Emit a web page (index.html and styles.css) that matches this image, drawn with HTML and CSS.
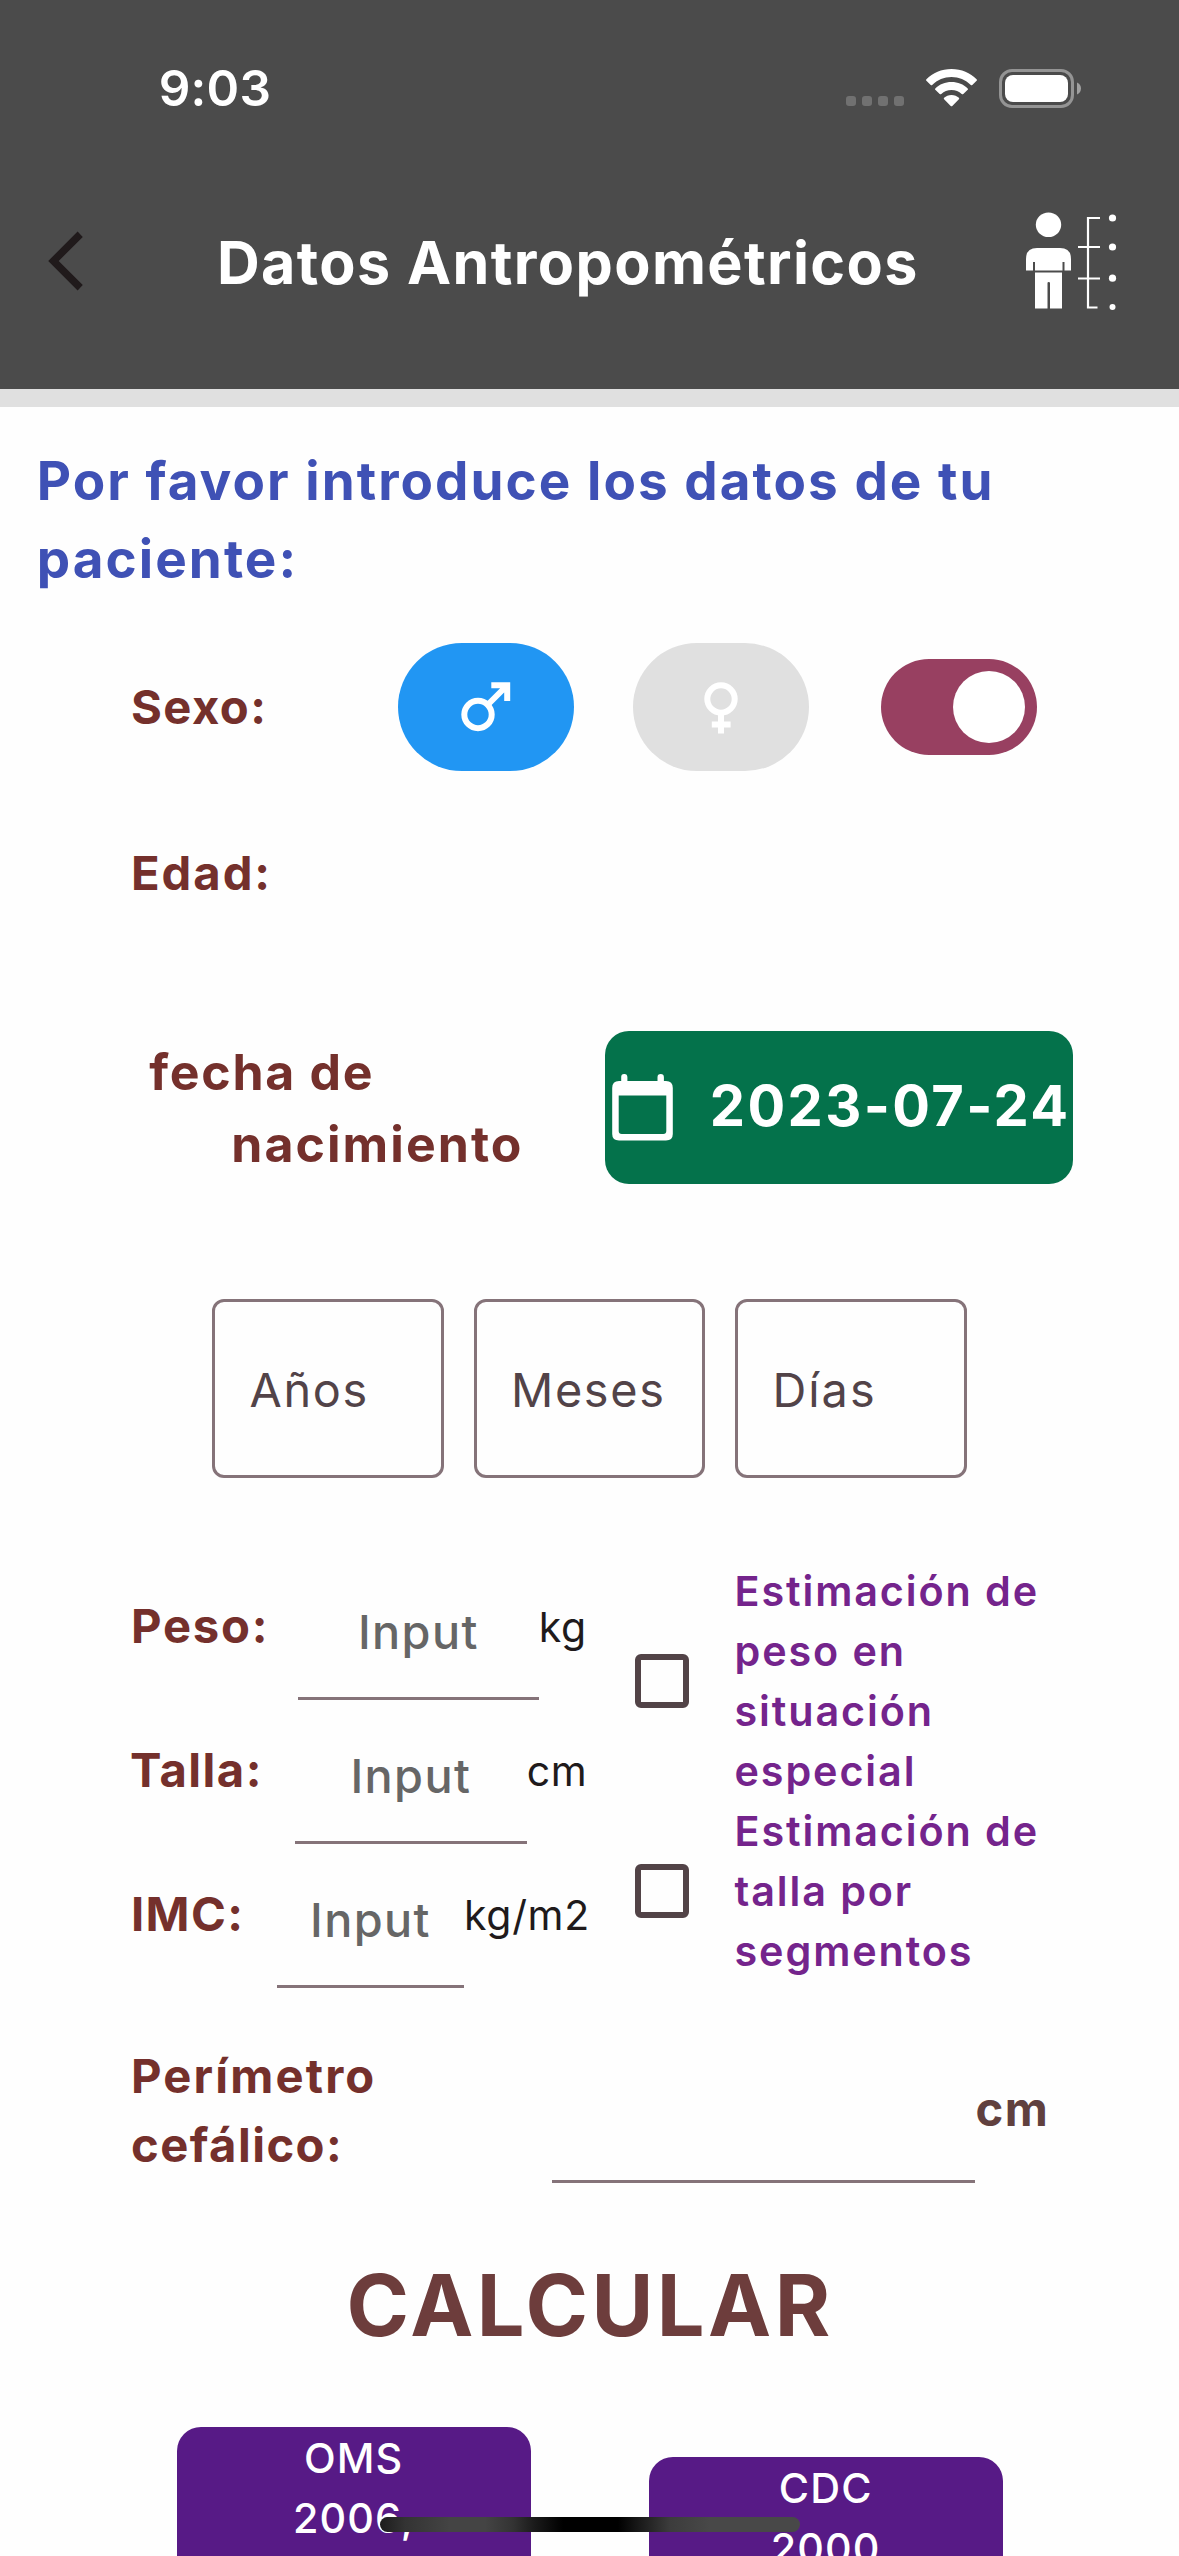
FILE: index.html
```html
<!DOCTYPE html>
<html lang="es">
<head>
<meta charset="utf-8">
<title>Datos Antropométricos</title>
<link rel="stylesheet" href="styles.css">
</head>
<body>
<div class="screen">
  <header class="header">
    <div class="status-bar">
      <span class="clock">9:03</span>
      <div class="status-icons">
        <svg class="cellular" width="58" height="10" viewBox="0 0 58 10" fill="#717171"><rect width="10" height="10" rx="3"/><rect x="16" width="10" height="10" rx="3"/><rect x="32" width="10" height="10" rx="3"/><rect x="48" width="10" height="10" rx="3"/></svg>
        <svg class="wifi" width="51" height="38" viewBox="0 0 51 38" fill="#fff"><path d="M25.500 0C35.500 0 44.300 4 50.600 10.200Q51.300 11 50.600 11.800L46.300 16Q45.600 16.600 44.800 15.900C39.600 11 32.900 8 25.500 8S11.400 11 6.200 15.900Q5.400 16.600 4.700 16L0.400 11.800Q-0.300 11 0.400 10.200C6.700 4 15.500 0 25.500 0Z"/><path d="M25.500 13C31.900 13 37.500 15.400 41.700 19.400Q42.400 20.100 41.700 20.800L37.300 25Q36.500 25.600 35.700 25C33 22.500 29.500 21 25.500 21S18 22.500 15.300 25Q14.500 25.600 13.700 25L9.300 20.800Q8.600 20.100 9.300 19.400C13.500 15.400 19.100 13 25.500 13Z"/><path d="M25.500 26C28.500 26 31 27.100 32.900 28.800Q33.600 29.500 32.900 30.200L26.300 36.900Q25.500 37.600 24.700 36.900L18.100 30.200Q17.400 29.500 18.100 28.800C20 27.100 22.500 26 25.500 26Z"/></svg>
        <svg class="battery" width="82" height="39" viewBox="0 0 82 39"><rect x="1.500" y="1.500" width="72" height="36" rx="11.500" fill="none" stroke="#949494" stroke-width="3"/><rect x="6" y="6" width="63" height="27" rx="8" fill="#fff"/><path d="M78 13.500C80.400 14.500 82 16.800 82 19.500S80.400 24.500 78 25.500Z" fill="#a0a0a0"/></svg>
      </div>
    </div>
    <nav class="app-bar">
      <svg class="back" width="35" height="60" viewBox="0 0 35 60"><path d="M29.600 0.500L34.800 5.900L10.700 30L34.800 54.100L29.600 59.500L0.200 30Z" fill="#201a1b"/></svg>
      <h1 class="title">Datos Antropométricos</h1>
      <svg class="body-icon" width="92" height="98" viewBox="0 0 92 98" fill="#fff"><ellipse cx="22.500" cy="12.700" rx="12.700" ry="12.300"/><path d="M11 36H34Q45 36 45 47V58.500H38.500V50H36.500V58.500H9V50H7V58.500H0V47Q0 36 11 36Z"/><path d="M9 60.500H36V96.500H24V71Q24 70 22.700 70Q21.500 70 21.500 71V96.500H9Z"/><path d="M74 6H62V95.500H71.500M52 35H74M52 66.500H74" fill="none" stroke="#fff" stroke-width="2.200"/><circle cx="86.500" cy="6" r="3.600"/><circle cx="86.500" cy="35" r="3.600"/><circle cx="86.500" cy="66.200" r="3.600"/><circle cx="86.500" cy="95" r="3"/></svg>
    </nav>
  </header>
  <main class="form">
    <h2 class="intro">Por favor introduce los datos de tu<br>paciente:</h2>

    <section class="sex-row">
      <span class="label sex-label">Sexo:</span>
      <div class="sex male">
        <svg width="50" height="50" viewBox="0 0 50 50" fill="none" stroke="#fff" stroke-width="6"><circle cx="17" cy="32.500" r="13.700"/><path d="M26.500 23L44 5.500M30.300 3.300H46.200V19"/></svg>
      </div>
      <div class="sex female">
        <svg width="34" height="52" viewBox="0 0 34 52" fill="none" stroke="#fff" stroke-width="6"><circle cx="17" cy="17" r="13.700"/><path d="M17 31V51.500M7.800 42.500H26.600"/></svg>
      </div>
      <div class="toggle"><div class="knob"></div></div>
    </section>

    <div class="label age-label">Edad:</div>

    <section class="birth-row">
      <div class="birth-label"><span class="birth-first">fecha de</span><span class="birth-second">nacimiento</span></div>
      <div class="date-button">
        <svg width="61" height="67" viewBox="0 0 61 67"><path d="M12 0A3.300 3.300 0 0 1 15.400 3.300V7H45.500V3.300A3.200 3.200 0 0 1 51.900 3.300V7H54Q60.800 7 60.800 14V60Q60.800 66.500 54 66.500H7Q0.200 66.500 0.200 60V14Q0.200 7 7 7H9.200V3.300A3.100 3.100 0 0 1 12 0ZM6.700 21.500V57Q6.700 60 9.700 60H51.300Q54.300 60 54.300 57V21.500Z" fill="#fff" fill-rule="evenodd"/></svg>
        <span class="date">2023-07-24</span>
      </div>
    </section>

    <section class="age-boxes">
      <div class="age-box">Años</div>
      <div class="age-box meses">Meses</div>
      <div class="age-box dias">Días</div>
    </section>

    <section class="measures">
      <div class="fields">
        <div class="field peso"><span class="label">Peso:</span><span class="entry">Input</span><span class="unit">kg</span></div>
        <div class="field talla"><span class="label">Talla:</span><span class="entry">Input</span><span class="unit">cm</span></div>
        <div class="field imc"><span class="label">IMC:</span><span class="entry">Input</span><span class="unit">kg/m2</span></div>
      </div>
      <div class="options">
        <div class="option"><span class="checkbox"></span><p>Estimación de<br>peso en<br>situación<br>especial</p></div>
        <div class="option"><span class="checkbox"></span><p>Estimación de<br>talla por<br>segmentos</p></div>
      </div>
    </section>

    <section class="head-row">
      <div class="head-label">Perímetro<br><span class="head-second">cefálico:</span></div>
      <div class="head-entry"></div>
      <span class="head-unit">cm</span>
    </section>

    <div class="calculate">CALCULAR</div>

    <section class="references">
      <div class="reference">OMS<br>2006,</div>
      <div class="reference cdc">CDC<br>2000</div>
    </section>
  </main>
  <div class="home-indicator"></div>
</div>
</body>
</html>
```

FILE: styles.css
```css
* { box-sizing: border-box; }
body { margin: 0; background: #fff; font-family: Inter, "Liberation Sans", sans-serif; font-kerning: normal; }
svg { display: block; flex: none; }
h1, h2, p { margin: 0; }

.screen { position: relative; width: 1179px; height: 2556px; overflow: hidden; background: #fefefe; }

/* Header */
.header { height: 407px; background: #4b4b4b; border-bottom: 18px solid #e0e0e0; }
.status-bar { height: 176px; padding: 0 98px 0 158.700px; display: flex; align-items: center; justify-content: space-between; }
.clock { color: #fff; font-size: 49.500px; font-weight: 600; letter-spacing: 0.200px; }
.status-icons { display: flex; align-items: center; }
.cellular { margin: 26px 22px 0 0; }
.wifi { margin-right: 22px; }
.app-bar { height: 213px; padding: 0 61px 40px 48px; display: flex; align-items: center; }
.back { margin: -4px 134px 0 0; }
.title { flex: 1; color: #fff; font-size: 59.200px; font-weight: 700; letter-spacing: 1.380px; white-space: nowrap; }
.body-icon { margin-top: -4px; }

/* Form */
.intro { padding: 35px 0 0 36.800px; color: #3f51b5; font-size: 53px; font-weight: 700; line-height: 78px; letter-spacing: 2.050px; white-space: nowrap; }
.label { color: #74302c; font-size: 47.200px; font-weight: 700; line-height: 66px; letter-spacing: 1.450px; }

.sex-row { height: 128px; margin-top: 45px; padding-left: 131px; display: flex; align-items: center; }
.sex-label { width: 266.500px; }
.sex { width: 176px; height: 128px; border-radius: 64px; display: flex; align-items: center; }
.male { background: #2196f3; margin-right: 59.500px; padding-left: 63px; }
.female { background: #e0e0e0; padding: 2px 0 0 71px; }
.toggle { width: 156.500px; height: 96px; margin-left: 71.500px; padding: 12px; border-radius: 48px; background: #984061; display: flex; justify-content: flex-end; }
.knob { width: 72px; height: 72px; border-radius: 50%; background: #fff; }
.age-label { margin: 69px 0 0 131px; letter-spacing: 1.950px; }

.birth-row { margin-top: 125px; display: flex; align-items: center; height: 153px; padding-left: 149.300px; }
.birth-label { width: 455.500px; color: #74302c; font-size: 50px; font-weight: 700; line-height: 72px; letter-spacing: 2.050px; display: flex; flex-direction: column; }
.birth-first { letter-spacing: 1.700px; }
.birth-second { padding-left: 82px; }
.date-button { width: 468.300px; height: 153px; padding-left: 7.500px; border-radius: 24px; background: #04724b; color: #fff; display: flex; align-items: center; gap: 36.500px; font-size: 56px; font-weight: 700; letter-spacing: 2.350px; white-space: nowrap; }
.date { padding-bottom: 3px; }

.age-boxes { margin: 115px 0 0 212px; display: flex; gap: 30px; }
.age-box { width: 231.500px; height: 179px; padding: 3px 0 0 34.500px; border: 3px solid #857379; border-radius: 12px; color: #524348; font-size: 46.800px; letter-spacing: 1.650px; display: flex; align-items: center; }
.dias { letter-spacing: 2px; }

/* Weight, height and body mass index */
.measures { margin: 78px 0 0 131px; height: 432px; display: flex; }
.fields { width: 503.500px; }
.field { height: 144px; display: flex; align-items: stretch; }
.field > .label { width: 167px; line-height: 140px; }
.peso > .label { letter-spacing: 1.750px; }
.talla > .label { width: 164px; letter-spacing: 1.450px; margin-left: -1px; margin-right: 1px; }
.imc > .label { width: 146px; letter-spacing: 1.350px; }
.entry { width: 240.700px; border-bottom: 3px solid #857379; color: #666; font-size: 46.800px; font-weight: 500; line-height: 152px; letter-spacing: 1.400px; text-align: center; }
.talla > .entry { width: 231.700px; }
.imc > .entry { width: 187px; }
.unit { color: #201a1b; font-size: 41px; line-height: 142px; letter-spacing: 0.700px; }
.options { padding-top: 5px; }
.option { display: flex; align-items: center; }
.checkbox { width: 54px; height: 54px; margin-right: 46px; border: 6px solid #524347; border-radius: 6px; }
.option p { color: #74248c; font-size: 41.300px; font-weight: 600; line-height: 60px; letter-spacing: 1.900px; }

/* Head circumference */
.head-row { margin: 55px 0 0 131px; height: 140px; display: flex; }
.head-label { width: 421px; margin-top: -2px; color: #74302c; font-size: 47.200px; font-weight: 700; line-height: 69px; letter-spacing: 2.150px; }
.head-second { letter-spacing: 1.450px; }
.head-entry { width: 422.500px; border-bottom: 3px solid #857379; }
.head-unit { padding-left: 1px; color: #60403e; font-size: 47.200px; font-weight: 700; line-height: 132px; letter-spacing: 1.600px; }

.calculate { margin: 72px 0 0 346.500px; color: #6d3d3c; font-size: 84.600px; font-weight: 700; line-height: 100px; letter-spacing: 3.400px; }

.references { margin: 72px 0 0 176.700px; display: flex; align-items: flex-start; gap: 118px; }
.reference { width: 354px; height: 240px; padding-top: 1px; border-radius: 24px; background: #571a86; color: #fff; font-size: 41.300px; font-weight: 500; line-height: 60px; letter-spacing: 1.100px; text-align: center; }
.cdc { margin-top: 30px; }

.home-indicator { position: absolute; left: 379.500px; bottom: 24px; width: 420px; height: 15px; border-radius: 7.500px; background: linear-gradient(90deg, #1c1c1c 0, #333 25px, #444 70px, #444 105px, #333 133px, #1a1a1a 155px, #000 183px, #000 238px, #1a1a1a 260px, #3c3c3c 290px, #484848 330px, #484848 100%); }
```
